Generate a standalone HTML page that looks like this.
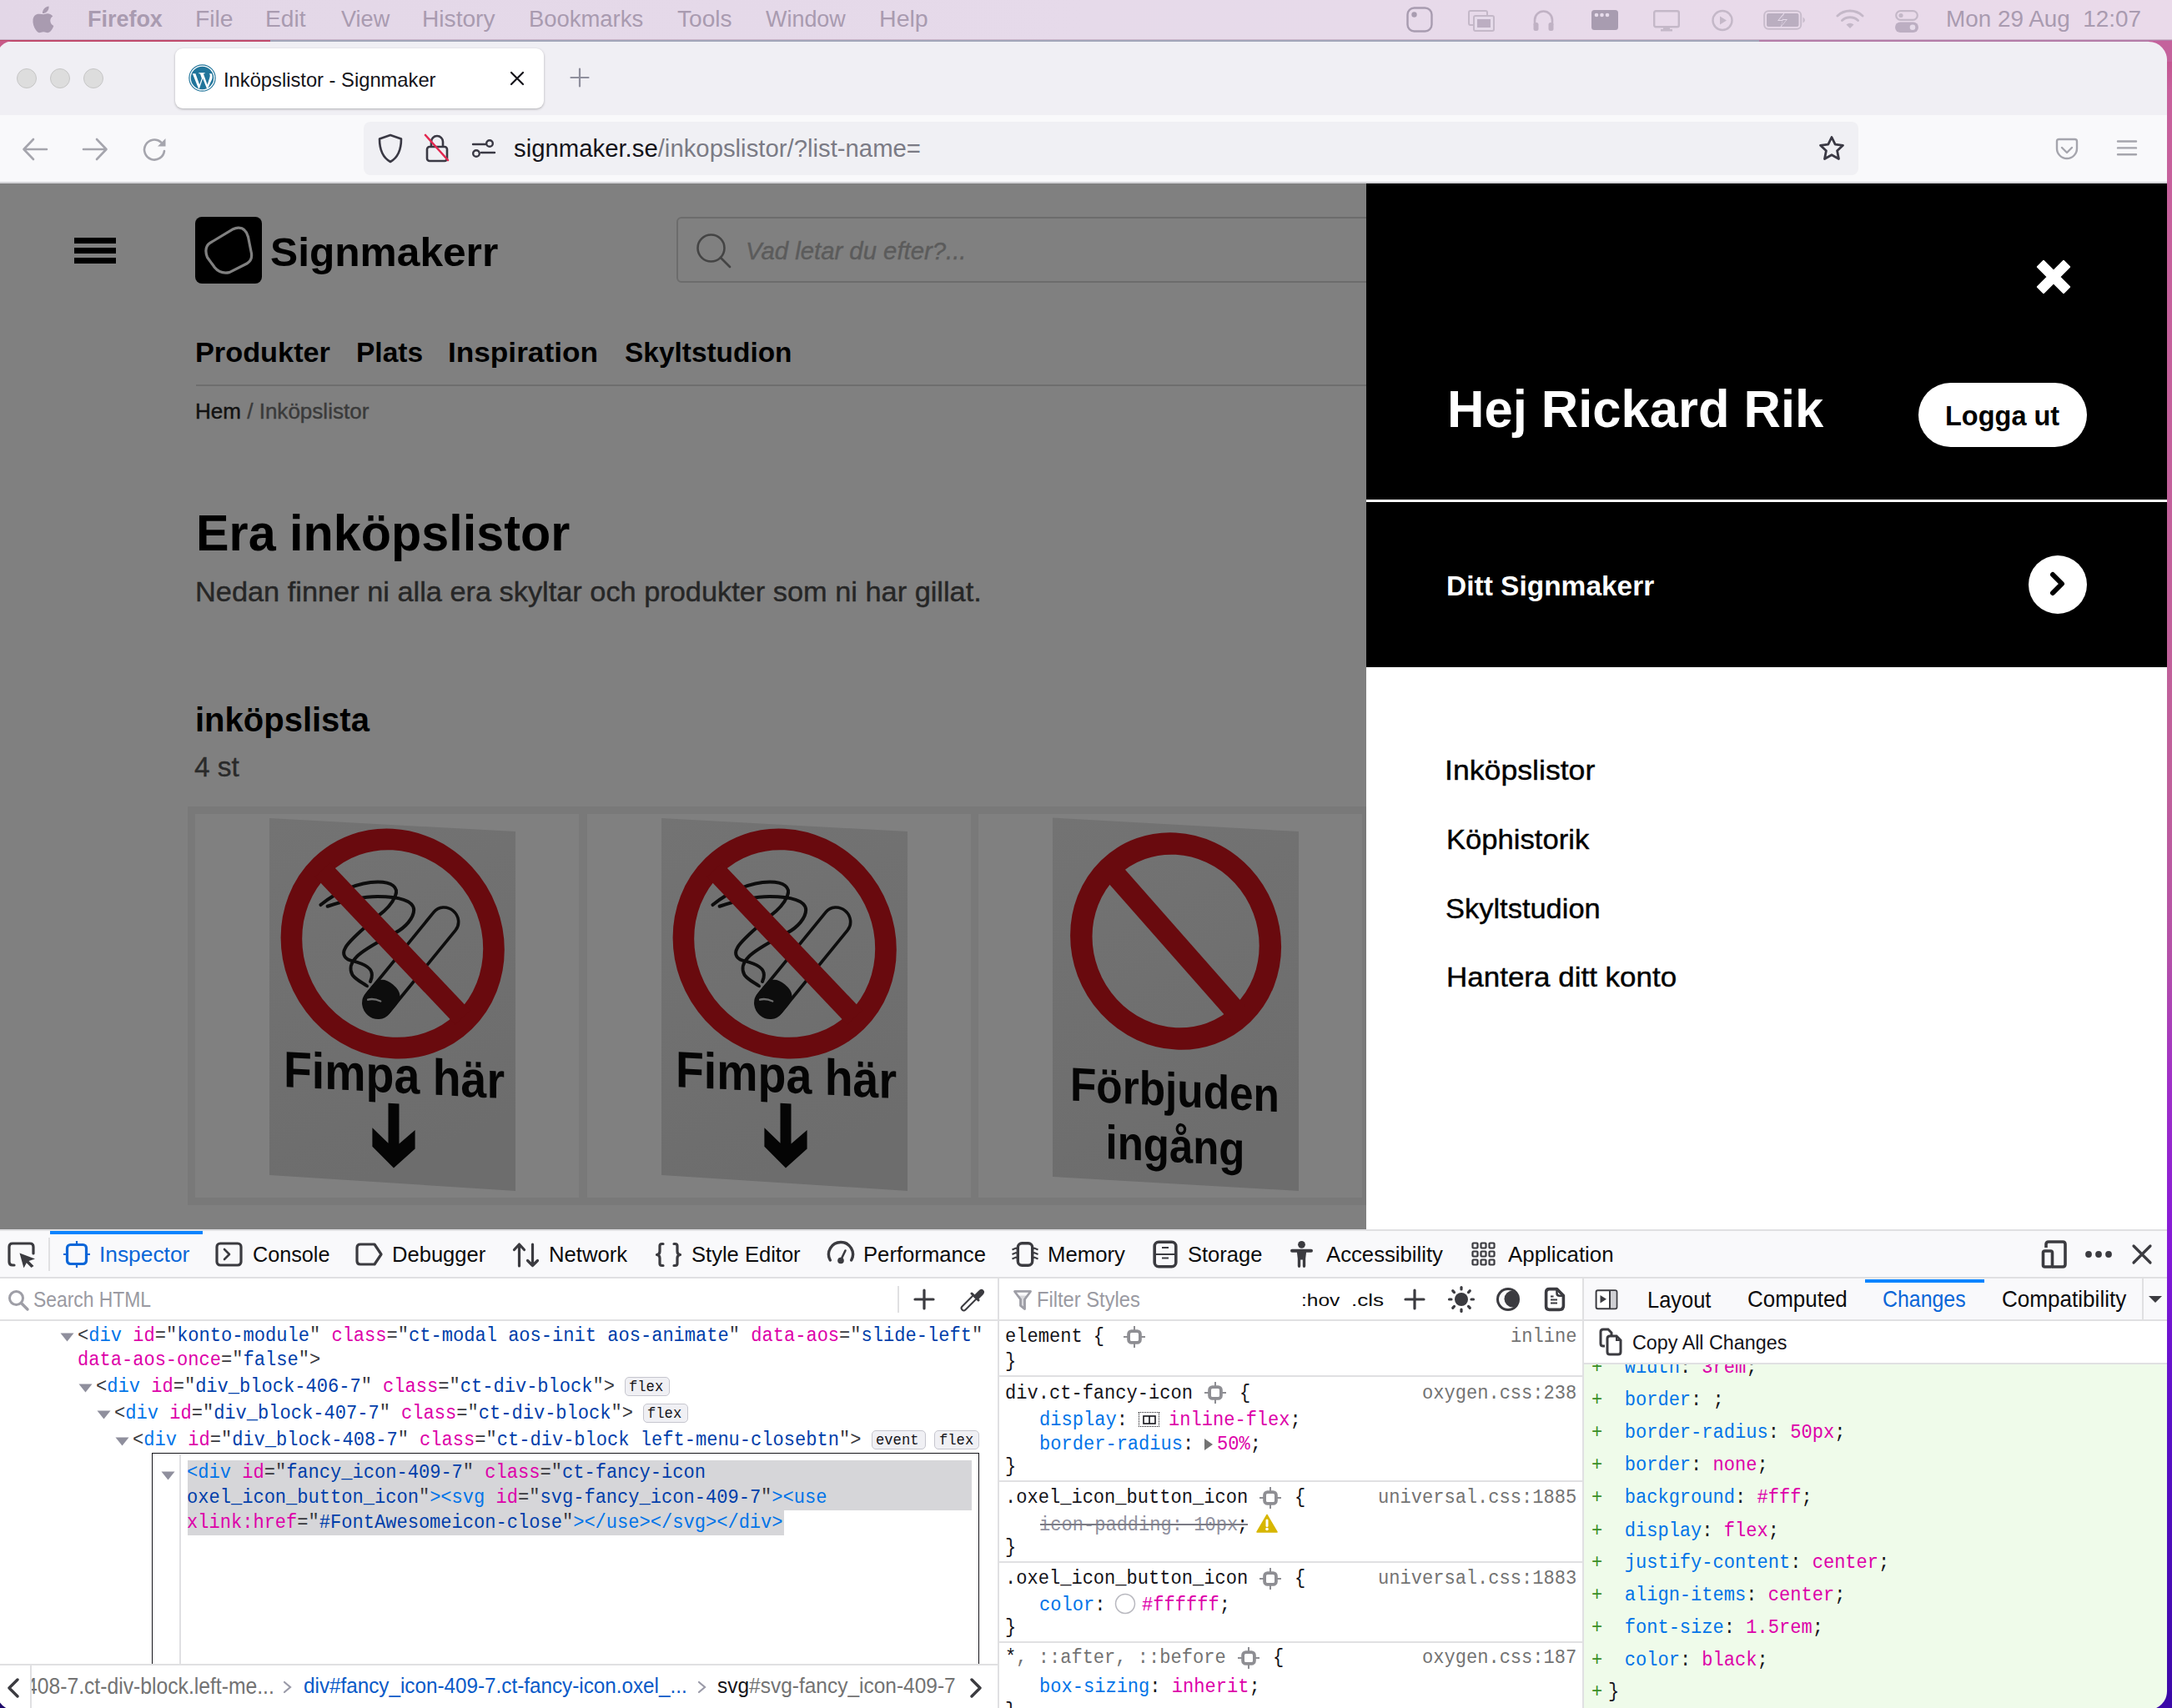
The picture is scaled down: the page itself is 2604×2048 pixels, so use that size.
<!DOCTYPE html>
<html><head><meta charset="utf-8">
<style>
*{box-sizing:border-box;margin:0;padding:0}
html,body{width:2604px;height:2048px;overflow:hidden;background:#fff}
body{position:relative;font-family:"Liberation Sans",sans-serif}
.t{position:absolute;white-space:nowrap;transform-origin:0 0}
</style></head><body>
<div class="t" style="left:0;top:0;width:2604px;height:2048px;background:linear-gradient(180deg,#e08ab0 0px,#c86aa0 400px,#b04aa8 1200px,#7a1cd0 1700px,#5012c0 2048px)"></div>
<div class="t" style="left:0;top:0;width:2604px;height:48px;background:linear-gradient(90deg,#e3d7e7,#e6daea 50%,#eadaea)"></div>
<div class="t" style="left:0.0px;top:47.0px;width:2604.0px;height:1.0px;background:rgba(150,110,140,.35);"></div>
<svg class="t" style="left:38.0px;top:6.0px;" width="30" height="34" viewBox="0 0 30 34"><path d="M20.5 1.5C21 4 19.8 6.5 18.2 8C16.6 9.6 14.3 10.2 13 10C12.7 7.6 13.9 5.2 15.3 3.9C16.8 2.4 19 1.5 20.5 1.5Z M13.8 11.2C15.4 11.2 17 10.2 18.8 10.2C21.8 10.2 24 11.8 25.3 13.6C22.4 15.4 22.2 18.2 22.4 19.8C22.7 22.4 24.4 24 26.3 25C25.6 27.2 24.4 29.4 23 31C21.8 32.4 20.6 33.2 19 33.2C17.2 33.2 16.5 32.2 14.2 32.2C11.8 32.2 11 33.2 9.3 33.2C7.6 33.2 6.3 31.8 5 30C2.5 26.5 1 21.5 1.5 17.5C2 13.4 5 10.8 8.4 10.8C10.6 10.8 12.2 11.2 13.8 11.2Z" fill="#a99bb0"/></svg>
<div class="t" style="left:104.75px;top:6.51px;font-size:26.81px;line-height:32px;color:#a99bb0;font-weight:bold;transform:scaleX(1.0053);">Firefox</div>
<div class="t" style="left:233.74px;top:6.51px;font-size:26.81px;line-height:32px;color:#a99bb0;transform:scaleX(1.0549);">File</div>
<div class="t" style="left:317.75px;top:6.51px;font-size:26.81px;line-height:32px;color:#a99bb0;transform:scaleX(1.0493);">Edit</div>
<div class="t" style="left:408.56px;top:6.51px;font-size:26.81px;line-height:32px;color:#a99bb0;transform:scaleX(1.0102);">View</div>
<div class="t" style="left:506.45px;top:6.51px;font-size:26.81px;line-height:32px;color:#a99bb0;transform:scaleX(1.0500);">History</div>
<div class="t" style="left:633.81px;top:6.51px;font-size:26.81px;line-height:32px;color:#a99bb0;transform:scaleX(1.0231);">Bookmarks</div>
<div class="t" style="left:812.14px;top:6.51px;font-size:26.81px;line-height:32px;color:#a99bb0;transform:scaleX(1.0469);">Tools</div>
<div class="t" style="left:918.47px;top:6.51px;font-size:26.81px;line-height:32px;color:#a99bb0;transform:scaleX(1.0051);">Window</div>
<div class="t" style="left:1053.71px;top:6.51px;font-size:26.81px;line-height:32px;color:#a99bb0;transform:scaleX(1.0659);">Help</div>
<div class="t" style="left:2332.77px;top:6.51px;font-size:26.81px;line-height:32px;color:#a99bb0;transform:scaleX(1.0402);white-space:pre;">Mon 29 Aug  12:07</div>
<svg class="t" style="left:1686.0px;top:8.0px;" width="32" height="31" viewBox="0 0 32 31"><rect x="1.5" y="1.5" width="29" height="28" rx="8" fill="none" stroke="#a89cb0" stroke-width="2.4"/><circle cx="9.5" cy="9.5" r="3.2" fill="#a89cb0"/></svg>
<svg class="t" style="left:1760.0px;top:12.0px;" width="32" height="26" viewBox="0 0 32 26"><rect x="1" y="1" width="22" height="17" rx="2" fill="none" stroke="#c4b8c8" stroke-width="2"/><rect x="7" y="7" width="24" height="18" rx="2" fill="#e6dbea" stroke="#c4b8c8" stroke-width="2"/><rect x="11" y="11" width="16" height="10" fill="#bcaec2"/></svg>
<svg class="t" style="left:1837.0px;top:10.0px;" width="27" height="28" viewBox="0 0 27 28"><path d="M3 20V14A10.5 10.5 0 0 1 24 14V20" fill="none" stroke="#c0b2c4" stroke-width="2.6"/><rect x="1.5" y="17" width="6" height="10" rx="2.5" fill="#c0b2c4"/><rect x="19.5" y="17" width="6" height="10" rx="2.5" fill="#c0b2c4"/></svg>
<svg class="t" style="left:1908.0px;top:12.0px;" width="32" height="24" viewBox="0 0 32 24"><rect x="0" y="0" width="32" height="24" rx="3.5" fill="#a89cb0"/><circle cx="6" cy="6" r="2.3" fill="#e6dbea"/><circle cx="12.5" cy="6" r="2.3" fill="#e6dbea"/><circle cx="19" cy="6" r="2.3" fill="#e6dbea"/></svg>
<svg class="t" style="left:1982.0px;top:12.0px;" width="32" height="26" viewBox="0 0 32 26"><rect x="1.2" y="1.2" width="29.6" height="19" rx="2" fill="none" stroke="#c4b8c8" stroke-width="2.4"/><rect x="12" y="20" width="8" height="3" fill="#c4b8c8"/><rect x="9" y="23" width="14" height="2.5" fill="#c4b8c8"/></svg>
<svg class="t" style="left:2052.0px;top:11.0px;" width="26" height="27" viewBox="0 0 26 27"><circle cx="13" cy="13.5" r="11.5" fill="none" stroke="#c4b8c8" stroke-width="2.4"/><path d="M10 8.5L18 13.5L10 18.5Z" fill="#c4b8c8"/></svg>
<svg class="t" style="left:2114.0px;top:12.0px;" width="52" height="24" viewBox="0 0 52 24"><rect x="1.2" y="1.2" width="44" height="21.6" rx="5" fill="none" stroke="#c8bccc" stroke-width="2"/><rect x="4" y="4" width="38.5" height="16" rx="2" fill="#baaec0"/><path d="M47.5 8.5V15.5Q50 14 50 12Q50 10 47.5 8.5Z" fill="#c8bccc"/><path d="M26 2L17 13H23L20 22L29 11H23Z" fill="#e6dbea"/><path d="M25.5 4.5L18.8 12H23.6L21.2 19.5L27.5 12H22.5Z" fill="#baaec0"/></svg>
<svg class="t" style="left:2201.0px;top:10.0px;" width="34" height="25" viewBox="0 0 34 25"><path d="M2 9A22 22 0 0 1 32 9" fill="none" stroke="#c4b8c8" stroke-width="3" stroke-linecap="round"/><path d="M7.5 14.5A14 14 0 0 1 26.5 14.5" fill="none" stroke="#c4b8c8" stroke-width="3" stroke-linecap="round"/><path d="M12.5 19.5A6.5 6.5 0 0 1 21.5 19.5L17 24Z" fill="#c4b8c8"/></svg>
<svg class="t" style="left:2272.0px;top:12.0px;" width="28" height="27" viewBox="0 0 28 27"><rect x="1.2" y="1.2" width="25.6" height="10.6" rx="5.3" fill="none" stroke="#c4b8c8" stroke-width="2.2"/><circle cx="7" cy="6.5" r="2.6" fill="#c4b8c8"/><rect x="0" y="14.5" width="28" height="12.5" rx="6.2" fill="#bcaec2"/><circle cx="21" cy="20.7" r="3.3" fill="#e6dbea"/></svg>
<div class="t" style="left:0.0px;top:50.0px;width:2598.0px;height:88.0px;background:#f0eff4;"></div>
<div class="t" style="left:0.0px;top:138.0px;width:2598.0px;height:80.0px;background:#f9f9fb;"></div>
<div class="t" style="left:0.0px;top:218.0px;width:2598.0px;height:2.0px;background:#d4d4d8;"></div>
<div class="t" style="left:20px;top:82px;width:24px;height:24px;border-radius:50%;background:#dddddd;border:1px solid #c6c6c6"></div>
<div class="t" style="left:60px;top:82px;width:24px;height:24px;border-radius:50%;background:#dddddd;border:1px solid #c6c6c6"></div>
<div class="t" style="left:100px;top:82px;width:24px;height:24px;border-radius:50%;background:#dddddd;border:1px solid #c6c6c6"></div>
<div class="t" style="left:210px;top:58px;width:442px;height:72px;background:#fff;border-radius:9px;box-shadow:0 1px 3px rgba(0,0,0,.28)"></div>
<svg class="t" style="left:226.0px;top:77.0px;" width="33" height="33" viewBox="0 0 33 33"><circle cx="16.5" cy="16.5" r="16.2" fill="#21759b"/><circle cx="16.5" cy="16.5" r="14.4" fill="none" stroke="#fff" stroke-width="1.3"/><path d="M4.8 11.2H8.4L13.2 24.6L15.9 16.9L14 11.6L12.3 11.3V10.3H19.6V11.3L17.9 11.6L22.6 24.6L25.3 16.2C26.3 13.2 25.6 11.8 24.6 11.2H27.8C28.7 13.2 29 15.6 28.2 18L23.1 29.1H21.9L17.1 16.9L13.1 29.1H11.9Z" fill="#fff"/></svg>
<div class="t" style="left:267.86px;top:81.97px;font-size:23.19px;line-height:28px;color:#15141a;transform:scaleX(1.0233);">Inköpslistor - Signmaker</div>
<svg class="t" style="left:611.0px;top:85.0px;" width="18" height="18" viewBox="0 0 18 18"><path d="M2 2L16 16M16 2L2 16" stroke="#15141a" stroke-width="2.2" stroke-linecap="round"/></svg>
<svg class="t" style="left:683.0px;top:81.0px;" width="24" height="24" viewBox="0 0 24 24"><path d="M12 1.5V22.5M1.5 12H22.5" stroke="#8f8f9d" stroke-width="2.2" stroke-linecap="round"/></svg>
<svg class="t" style="left:26.0px;top:165.0px;" width="32" height="28" viewBox="0 0 32 28"><path d="M30 14H3M14 2L2.5 14L14 26" fill="none" stroke="#a5a5ad" stroke-width="2.6" stroke-linecap="round" stroke-linejoin="round"/></svg>
<svg class="t" style="left:98.0px;top:165.0px;" width="32" height="28" viewBox="0 0 32 28"><path d="M2 14H29M18 2L29.5 14L18 26" fill="none" stroke="#a5a5ad" stroke-width="2.6" stroke-linecap="round" stroke-linejoin="round"/></svg>
<svg class="t" style="left:170.0px;top:164.0px;" width="32" height="32" viewBox="0 0 32 32"><path d="M27 17A12 12 0 1 1 23 6.5" fill="none" stroke="#a5a5ad" stroke-width="2.6" stroke-linecap="round"/><path d="M28.5 2V11.5H19Z" fill="#a5a5ad"/></svg>
<div class="t" style="left:436px;top:146px;width:1792px;height:64px;background:#f0f0f4;border-radius:8px"></div>
<svg class="t" style="left:453.0px;top:160.0px;" width="30" height="36" viewBox="0 0 30 36"><path d="M15 2L28 6.5C28 20 24 29 15 34C6 29 2 20 2 6.5Z" fill="none" stroke="#3a3944" stroke-width="2.6" stroke-linejoin="round"/></svg>
<svg class="t" style="left:508.0px;top:160.0px;" width="32" height="36" viewBox="0 0 32 36"><path d="M9 16V10A7 7 0 0 1 23 10V16" fill="none" stroke="#3a3944" stroke-width="2.6"/><rect x="4" y="16" width="24" height="17" rx="3" fill="none" stroke="#3a3944" stroke-width="2.6"/><path d="M2 2L29 32" stroke="#e22850" stroke-width="2.6" stroke-linecap="round"/></svg>
<svg class="t" style="left:565.0px;top:165.0px;" width="30" height="26" viewBox="0 0 30 26"><circle cx="22" cy="7" r="3.8" fill="none" stroke="#3a3944" stroke-width="2.4"/><circle cx="6" cy="19" r="3.8" fill="none" stroke="#3a3944" stroke-width="2.4"/><path d="M2 8H17M12 18H28" stroke="#3a3944" stroke-width="2.4" stroke-linecap="round"/></svg>
<div class="t" style="left:616.12px;top:160.49px;font-size:30.34px;line-height:36px;color:#15141a;transform:scaleX(0.9666);">signmaker.se<span style="color:#7b7b85">/inkopslistor/?list-name=</span></div>
<svg class="t" style="left:2179.0px;top:161.0px;" width="34" height="34" viewBox="0 0 34 34"><path d="M17 3.5L21.2 12.2L30.5 13.3L23.6 19.8L25.5 29.5L17 24.7L8.5 29.5L10.4 19.8L3.5 13.3L12.8 12.2Z" fill="none" stroke="#3a3944" stroke-width="2.8" stroke-linejoin="round"/></svg>
<svg class="t" style="left:2463.0px;top:165.0px;" width="30" height="30" viewBox="0 0 30 30"><path d="M3 4.5Q3 2 5.5 2H24.5Q27 2 27 4.5V13A12 12 0 0 1 3 13Z" fill="none" stroke="#a5a5ad" stroke-width="2.4"/><path d="M9 12L15 18L21 12" fill="none" stroke="#a5a5ad" stroke-width="2.4" stroke-linecap="round" stroke-linejoin="round"/></svg>
<svg class="t" style="left:2537.0px;top:167.0px;" width="26" height="22" viewBox="0 0 26 22"><path d="M2 2.5H24M2 10.4H24M2 18.2H24" stroke="#a5a5ad" stroke-width="2.4" stroke-linecap="round"/></svg>
<div class="t" style="left:0.0px;top:220.0px;width:1638.0px;height:1254.0px;background:#808080;"></div>
<div class="t" style="left:89.0px;top:285.0px;width:50.0px;height:6.5px;background:#000;"></div>
<div class="t" style="left:89.0px;top:297.0px;width:50.0px;height:6.5px;background:#000;"></div>
<div class="t" style="left:89.0px;top:309.0px;width:50.0px;height:6.5px;background:#000;"></div>
<div class="t" style="left:234px;top:260px;width:80px;height:80px;background:#000;border-radius:8px"></div>
<svg class="t" style="left:234.0px;top:260.0px;" width="80" height="80" viewBox="0 0 80 80"><path d="M45.5 14.7L18 31.2Q10 36.5 14.5 48.5L23.4 60.8Q30 68.8 41 66.6L62 56Q68.8 52 67.4 43.5L63.5 24Q60.5 13 51.8 13.2Q48.5 13.3 45.5 14.7Z" fill="none" stroke="#808080" stroke-width="3.2" stroke-linejoin="round"/></svg>
<div class="t" style="left:324.11px;top:273.72px;font-size:47.29px;line-height:57px;color:#000;font-weight:bold;transform:scaleX(1.0504);">Signmakerr</div>
<div class="t" style="left:811px;top:260px;width:900px;height:79px;border:2px solid #6c6c6c;border-radius:6px"></div>
<svg class="t" style="left:832.0px;top:278.0px;" width="46" height="46" viewBox="0 0 46 46"><circle cx="20.5" cy="19.5" r="16" fill="none" stroke="#444" stroke-width="2.6"/><path d="M32 31L43 42" stroke="#444" stroke-width="2.8" stroke-linecap="round"/></svg>
<div class="t" style="left:893.51px;top:283.06px;font-size:29.57px;line-height:35px;color:#5b5b5b;font-style:italic;transform:scaleX(0.9915);-webkit-text-stroke:0.4px currentColor;">Vad letar du efter?...</div>
<div class="t" style="left:234.07px;top:401.70px;font-size:33.77px;line-height:41px;color:#000;font-weight:bold;transform:scaleX(1.0156);">Produkter</div>
<div class="t" style="left:427.32px;top:401.70px;font-size:33.77px;line-height:41px;color:#000;font-weight:bold;transform:scaleX(0.9914);">Plats</div>
<div class="t" style="left:537.21px;top:401.70px;font-size:33.77px;line-height:41px;color:#000;font-weight:bold;transform:scaleX(1.0426);">Inspiration</div>
<div class="t" style="left:748.60px;top:401.62px;font-size:34.00px;line-height:41px;color:#000;font-weight:bold;transform:scaleX(0.9829);">Skyltstudion</div>
<div class="t" style="left:235.0px;top:461.0px;width:1403.0px;height:2.0px;background:#6e6e6e;"></div>
<div class="t" style="left:233.82px;top:478.16px;font-size:24.93px;line-height:30px;color:#111;transform:scaleX(1.0444);-webkit-text-stroke:0.4px currentColor;">Hem<span style="color:#3a3a3a"> / Inköpslistor</span></div>
<div class="t" style="left:234.85px;top:603.21px;font-size:60.58px;line-height:73px;color:#000;font-weight:bold;transform:scaleX(0.9790);">Era inköpslistor</div>
<div class="t" style="left:234.15px;top:690.20px;font-size:33.48px;line-height:40px;color:#262626;transform:scaleX(1.0259);-webkit-text-stroke:0.4px currentColor;">Nedan finner ni alla era skyltar och produkter som ni har gillat.</div>
<div class="t" style="left:233.60px;top:837.66px;font-size:41.38px;line-height:50px;color:#000;font-weight:bold;transform:scaleX(0.9667);">inköpslista</div>
<div class="t" style="left:233.43px;top:898.50px;font-size:34.06px;line-height:41px;color:#2a2a2a;transform:scaleX(0.9800);-webkit-text-stroke:0.4px currentColor;">4 st</div>
<div class="t" style="left:225.0px;top:967.0px;width:1413.0px;height:478.0px;background:#797979;"></div>
<div class="t" style="left:234.0px;top:976.0px;width:460.0px;height:460.0px;background:#808080;"></div>
<div class="t" style="left:704.0px;top:976.0px;width:460.0px;height:460.0px;background:#808080;"></div>
<div class="t" style="left:1173.0px;top:976.0px;width:460.0px;height:460.0px;background:#808080;"></div>
<svg class="t" style="left:0;top:0" width="1638" height="1474" viewBox="0 0 1638 1474"><defs><linearGradient id="sg" x1="0" y1="0" x2="0.3" y2="1"><stop offset="0" stop-color="#737373"/><stop offset="1" stop-color="#6d6d6d"/></linearGradient></defs><polygon points="323,981 618,997 618,1428 323,1409" fill="url(#sg)"/><g transform="translate(323 981) matrix(1 0.05424 0 1 0 0)"><ellipse cx="147.7" cy="142.5" rx="121.3" ry="125" fill="none" stroke="#690a0e" stroke-width="25.6"/><path d="M 61.4 100.7 C 82.0 82.6  107.0 71.2  130.0 69.5 C 147.0 68.6  155.0 74.6  151.0 84.8 C 147.0 95.0  139.0 103.5  129.9 110.5 C 117.0 122.7  97.0 139.7  91.3 150.0 C 86.0 159.3  91.0 165.1  100.7 165.9 C 111.0 168.0  123.0 172.3  122.9 181.1 C 123.0 184.3  122.0 187.4  121.0 189.4" fill="none" stroke="#0d0d0d" stroke-width="4" stroke-linecap="round"/><path d="M 69.6 102.0 C 87.0 95.3  109.0 88.1  129.9 87.0 C 155.0 85.6  173.0 89.6  173.2 100.6 C 173.0 110.6  163.0 122.2  151.0 129.2 C 135.0 138.7  113.0 150.9  104.2 161.0 C 97.0 168.7  96.0 176.8  99.5 182.6 C 104.0 188.4  111.0 191.0  117.0 194.9" fill="none" stroke="#0d0d0d" stroke-width="4" stroke-linecap="round"/><g transform="translate(119.2 228.6) rotate(-52.02)"><rect x="0" y="-16.5" width="164.3" height="33" rx="16.5" fill="none" stroke="#0d0d0d" stroke-width="3.6"/><path d="M18 -18.3H30Q47 -18.3 47 0Q47 18.3 30 18.3H18A18.3 18.3 0 0 1 18 -18.3Z" fill="#0d0d0d"/><path d="M13 -11.5Q19 -7.5 21.5 1" fill="none" stroke="#6e6e6e" stroke-width="2.4" stroke-linecap="round"/></g><path d="M63.7 58.5 L231.7 226.5" stroke="#690a0e" stroke-width="25.5"/><text x="17" y="321" font-family="Liberation Sans" font-weight="bold" font-size="61" fill="#050505" textLength="265" lengthAdjust="spacingAndGlyphs">Fimpa här</text><path d="M142.5 334H155.5V382L174.6 364.5V387L149 411.5L123.4 387V364.5L142.5 382Z" fill="#050505"/></g><polygon points="793,981 1088,997 1088,1428 793,1409" fill="url(#sg)"/><g transform="translate(793 981) matrix(1 0.05424 0 1 0 0)"><ellipse cx="147.7" cy="142.5" rx="121.3" ry="125" fill="none" stroke="#690a0e" stroke-width="25.6"/><path d="M 61.4 100.7 C 82.0 82.6  107.0 71.2  130.0 69.5 C 147.0 68.6  155.0 74.6  151.0 84.8 C 147.0 95.0  139.0 103.5  129.9 110.5 C 117.0 122.7  97.0 139.7  91.3 150.0 C 86.0 159.3  91.0 165.1  100.7 165.9 C 111.0 168.0  123.0 172.3  122.9 181.1 C 123.0 184.3  122.0 187.4  121.0 189.4" fill="none" stroke="#0d0d0d" stroke-width="4" stroke-linecap="round"/><path d="M 69.6 102.0 C 87.0 95.3  109.0 88.1  129.9 87.0 C 155.0 85.6  173.0 89.6  173.2 100.6 C 173.0 110.6  163.0 122.2  151.0 129.2 C 135.0 138.7  113.0 150.9  104.2 161.0 C 97.0 168.7  96.0 176.8  99.5 182.6 C 104.0 188.4  111.0 191.0  117.0 194.9" fill="none" stroke="#0d0d0d" stroke-width="4" stroke-linecap="round"/><g transform="translate(119.2 228.6) rotate(-52.02)"><rect x="0" y="-16.5" width="164.3" height="33" rx="16.5" fill="none" stroke="#0d0d0d" stroke-width="3.6"/><path d="M18 -18.3H30Q47 -18.3 47 0Q47 18.3 30 18.3H18A18.3 18.3 0 0 1 18 -18.3Z" fill="#0d0d0d"/><path d="M13 -11.5Q19 -7.5 21.5 1" fill="none" stroke="#6e6e6e" stroke-width="2.4" stroke-linecap="round"/></g><path d="M63.7 58.5 L231.7 226.5" stroke="#690a0e" stroke-width="25.5"/><text x="17" y="321" font-family="Liberation Sans" font-weight="bold" font-size="61" fill="#050505" textLength="265" lengthAdjust="spacingAndGlyphs">Fimpa här</text><path d="M142.5 334H155.5V382L174.6 364.5V387L149 411.5L123.4 387V364.5L142.5 382Z" fill="#050505"/></g><polygon points="1262.0,980.5 1557.0,997.0 1557.0,1428.0 1262.0,1411.0" fill="url(#sg)"/><g transform="translate(1262.0 980.5) matrix(1 0.05424 0 1 0 0)"><ellipse cx="147.6" cy="140.0" rx="113.3" ry="116.9" fill="none" stroke="#690a0e" stroke-width="26.4"/><path d="M71.3 60.2L221.4 222.2" stroke="#690a0e" stroke-width="26.5"/><text x="21" y="338" font-family="Liberation Sans" font-weight="bold" font-size="57" fill="#050505" textLength="251" lengthAdjust="spacingAndGlyphs">Förbjuden</text><text x="63.5" y="405" font-family="Liberation Sans" font-weight="bold" font-size="57" fill="#050505" textLength="167" lengthAdjust="spacingAndGlyphs">ingång</text></g></svg>
<div class="t" style="left:1638.0px;top:220.0px;width:960.0px;height:580.0px;background:#000;"></div>
<div class="t" style="left:1638.0px;top:800.0px;width:960.0px;height:674.0px;background:#fff;"></div>
<svg class="t" style="left:2440.0px;top:309.0px;" width="44" height="44" viewBox="0 0 44 44"><path d="M3.0 11.0 L10.0 4.0 L22.0 16.0 L34.0 4.0 L41.0 11.0 L29.0 23.0 L41.0 35.0 L34.0 42.0 L22.0 30.0 L10.0 42.0 L3.0 35.0 L15.0 23.0Z" fill="#fff" stroke="#fff" stroke-width="2.4" stroke-linejoin="round"/></svg>
<div class="t" style="left:1735.00px;top:451.91px;font-size:63.19px;line-height:76px;color:#fff;font-weight:bold;transform:scaleX(0.9735);">Hej Rickard Rik</div>
<div class="t" style="left:2300px;top:459px;width:201.7px;height:77px;background:#fff;border-radius:39px"></div>
<div class="t" style="left:2332.49px;top:478.10px;font-size:33.77px;line-height:41px;color:#000;font-weight:bold;transform:scaleX(0.9624);">Logga ut</div>
<div class="t" style="left:1638.0px;top:599.0px;width:960.0px;height:2.5px;background:#fff;"></div>
<div class="t" style="left:1734.22px;top:681.60px;font-size:33.77px;line-height:41px;color:#fff;font-weight:bold;transform:scaleX(0.9915);">Ditt Signmakerr</div>
<div class="t" style="left:2432px;top:665.5px;width:70px;height:70px;background:#fff;border-radius:50%"></div>
<svg class="t" style="left:2455.0px;top:685.0px;" width="24" height="30" viewBox="0 0 24 30"><path d="M6 4L17 15L6 26" fill="none" stroke="#000" stroke-width="6" stroke-linecap="round" stroke-linejoin="round"/></svg>
<div class="t" style="left:1731.79px;top:903.65px;font-size:33.33px;line-height:40px;color:#000;transform:scaleX(1.0697);-webkit-text-stroke:0.4px currentColor;">Inköpslistor</div>
<div class="t" style="left:1733.93px;top:986.65px;font-size:33.04px;line-height:40px;color:#000;transform:scaleX(1.0482);-webkit-text-stroke:0.4px currentColor;">Köphistorik</div>
<div class="t" style="left:1733.15px;top:1068.87px;font-size:34.14px;line-height:41px;color:#000;transform:scaleX(1.0096);-webkit-text-stroke:0.4px currentColor;">Skyltstudion</div>
<div class="t" style="left:1733.90px;top:1152.35px;font-size:33.62px;line-height:40px;color:#000;transform:scaleX(1.0409);-webkit-text-stroke:0.4px currentColor;">Hantera ditt konto</div>
<div class="t" style="left:0.0px;top:1474.0px;width:2598.0px;height:574.0px;background:#fff;"></div>
<div class="t" style="left:0.0px;top:1474.0px;width:2598.0px;height:58.0px;background:#f9f9fb;"></div>
<div class="t" style="left:0.0px;top:1474.0px;width:2598.0px;height:2.0px;background:#e0e0e2;"></div>
<div class="t" style="left:0.0px;top:1531.0px;width:2598.0px;height:2.0px;background:#e0e0e2;"></div>
<div class="t" style="left:60.0px;top:1475.5px;width:183.0px;height:4.0px;background:#0a84ff;"></div>
<div class="t" style="left:58.0px;top:1484.0px;width:2.0px;height:40.0px;background:#e0e0e2;"></div>
<svg class="t" style="left:9.0px;top:1489.0px;" width="36" height="31" viewBox="0 0 36 31"><path d="M8 28H6Q2 28 2 24V6Q2 2 6 2H27Q31 2 31 6V14" fill="none" stroke="#3b3b40" stroke-width="3.2" stroke-linecap="round"/><path d="M14.5 13.5L33 20.5L25.5 23L31.5 29L28.5 31L22.8 25.2L19.5 31.5Z" fill="#3b3b40"/></svg>
<svg class="t" style="left:75.0px;top:1487.0px;" width="34" height="34" viewBox="0 0 34 34"><rect x="5.5" y="5.5" width="23" height="23" rx="4" fill="none" stroke="#0a66d8" stroke-width="3.2"/><path d="M17 1V6M17 28V33M1 17H6M28 17H33" stroke="#0a66d8" stroke-width="2.2"/></svg>
<div class="t" style="left:118.63px;top:1488.91px;font-size:26.23px;line-height:31px;color:#0a66d8;transform:scaleX(1.0042);">Inspector</div>
<svg class="t" style="left:258.0px;top:1489.0px;" width="34" height="30" viewBox="0 0 34 30"><rect x="2" y="2" width="29" height="26" rx="4" fill="none" stroke="#3b3b40" stroke-width="3.2"/><path d="M11 9L17 15L11 21" fill="none" stroke="#3b3b40" stroke-width="2.6" stroke-linecap="round" stroke-linejoin="round"/></svg>
<div class="t" style="left:302.64px;top:1489.04px;font-size:25.86px;line-height:31px;color:#0c0c0d;transform:scaleX(0.9747);">Console</div>
<svg class="t" style="left:426.0px;top:1490.0px;" width="34" height="28" viewBox="0 0 34 28"><path d="M6 2H23L31 14L23 26H6Q2 26 2 22V6Q2 2 6 2Z" fill="none" stroke="#3b3b40" stroke-width="3.2" stroke-linejoin="round"/></svg>
<div class="t" style="left:469.55px;top:1488.91px;font-size:26.23px;line-height:31px;color:#0c0c0d;transform:scaleX(0.9746);">Debugger</div>
<svg class="t" style="left:614.0px;top:1489.0px;" width="34" height="31" viewBox="0 0 34 31"><path d="M8.5 29V3M2.5 9.5L8.5 3L14.5 9.5M24.5 3V28.5M18.5 22.5L24.5 28.5L30.5 22.5" fill="none" stroke="#3b3b40" stroke-width="3.2" stroke-linecap="round" stroke-linejoin="round"/></svg>
<div class="t" style="left:657.75px;top:1488.91px;font-size:26.23px;line-height:31px;color:#0c0c0d;transform:scaleX(0.9791);">Network</div>
<svg class="t" style="left:785.0px;top:1489.0px;" width="33" height="31" viewBox="0 0 33 31"><path d="M10 2.5H8.5Q6 2.5 6 5V11.5Q6 15 2.5 15.5Q6 16 6 19.5V26Q6 28.5 8.5 28.5H10M23 2.5H24.5Q27 2.5 27 5V11.5Q27 15 30.5 15.5Q27 16 27 19.5V26Q27 28.5 24.5 28.5H23" fill="none" stroke="#3b3b40" stroke-width="3.2" stroke-linecap="round" stroke-linejoin="round"/></svg>
<div class="t" style="left:828.85px;top:1489.04px;font-size:25.86px;line-height:31px;color:#0c0c0d;transform:scaleX(0.9879);">Style Editor</div>
<svg class="t" style="left:991.0px;top:1486.0px;" width="34" height="32" viewBox="0 0 34 32"><path d="M4.3 25A14.5 14.5 0 1 1 29.7 25" fill="none" stroke="#3b3b40" stroke-width="3.4" stroke-linecap="round"/><path d="M17 25L22.5 13.5" stroke="#3b3b40" stroke-width="2.6" stroke-linecap="round"/><circle cx="17" cy="25.5" r="3.8" fill="#3b3b40"/></svg>
<div class="t" style="left:1034.75px;top:1488.91px;font-size:26.23px;line-height:31px;color:#0c0c0d;transform:scaleX(0.9789);">Performance</div>
<svg class="t" style="left:1212.0px;top:1489.0px;" width="34" height="30" viewBox="0 0 34 30"><rect x="8.3" y="1.8" width="17.4" height="26.4" rx="5" fill="none" stroke="#3b3b40" stroke-width="3.4"/><path d="M1.5 9.5L6 7.5L8 8.5M1.5 15L6 13L8 14M1.5 20.5L6 18.5L8 19.5M32.5 9.5L28 7.5L26 8.5M32.5 15L28 13L26 14M32.5 20.5L28 18.5L26 19.5" fill="none" stroke="#3b3b40" stroke-width="2"/></svg>
<div class="t" style="left:1255.54px;top:1488.91px;font-size:26.23px;line-height:31px;color:#0c0c0d;transform:scaleX(0.9806);">Memory</div>
<svg class="t" style="left:1382.0px;top:1487.0px;" width="30" height="34" viewBox="0 0 30 34"><rect x="2.2" y="2.2" width="25.6" height="29.6" rx="5" fill="none" stroke="#3b3b40" stroke-width="3.6"/><path d="M2 17H28M11 9H19M11 21.5H19" stroke="#3b3b40" stroke-width="2.2"/></svg>
<div class="t" style="left:1424.35px;top:1489.04px;font-size:25.86px;line-height:31px;color:#0c0c0d;transform:scaleX(0.9867);">Storage</div>
<svg class="t" style="left:1546.0px;top:1487.0px;" width="32" height="34" viewBox="0 0 32 34"><circle cx="14.5" cy="5.3" r="4.4" fill="#3b3b40"/><path d="M3 12.8H26" stroke="#3b3b40" stroke-width="4" stroke-linecap="round"/><path d="M8.6 11.5H20.4L19.2 22V31Q19.2 33 17.4 33Q15.8 33 15.8 31V23.5H13.2V31Q13.2 33 11.6 33Q9.8 33 9.8 31V22Z" fill="#3b3b40"/></svg>
<div class="t" style="left:1590.00px;top:1488.91px;font-size:26.23px;line-height:31px;color:#0c0c0d;transform:scaleX(0.9802);">Accessibility</div>
<svg class="t" style="left:1764.0px;top:1489.0px;" width="30" height="30" viewBox="0 0 30 30"><rect x="1.5" y="1.5" width="6" height="6" rx="1" fill="none" stroke="#3b3b40" stroke-width="2.2"/><rect x="11.5" y="1.5" width="6" height="6" rx="1" fill="none" stroke="#3b3b40" stroke-width="2.2"/><rect x="21.5" y="1.5" width="6" height="6" rx="1" fill="none" stroke="#3b3b40" stroke-width="2.2"/><rect x="1.5" y="11.5" width="6" height="6" rx="1" fill="none" stroke="#3b3b40" stroke-width="2.2"/><rect x="11.5" y="11.5" width="6" height="6" rx="1" fill="none" stroke="#3b3b40" stroke-width="2.2"/><rect x="21.5" y="11.5" width="6" height="6" rx="1" fill="none" stroke="#3b3b40" stroke-width="2.2"/><rect x="1.5" y="21.5" width="6" height="6" rx="1" fill="none" stroke="#3b3b40" stroke-width="2.2"/><rect x="11.5" y="21.5" width="6" height="6" rx="1" fill="none" stroke="#3b3b40" stroke-width="2.2"/><rect x="21.5" y="21.5" width="6" height="6" rx="1" fill="none" stroke="#3b3b40" stroke-width="2.2"/></svg>
<div class="t" style="left:1808.00px;top:1488.91px;font-size:26.23px;line-height:31px;color:#0c0c0d;transform:scaleX(0.9876);">Application</div>
<svg class="t" style="left:2446.0px;top:1486.0px;" width="34" height="36" viewBox="0 0 34 36"><path d="M7 10V6Q7 3 10 3H27Q30 3 30 6V30Q30 33 27 33H14" fill="none" stroke="#3b3b40" stroke-width="3.6"/><rect x="3.5" y="14" width="11" height="19" rx="2" fill="none" stroke="#3b3b40" stroke-width="3.6"/></svg>
<svg class="t" style="left:2498.0px;top:1498.0px;" width="36" height="12" viewBox="0 0 36 12"><circle cx="6" cy="6" r="3.9" fill="#3b3b40"/><circle cx="18" cy="6" r="3.9" fill="#3b3b40"/><circle cx="30" cy="6" r="3.9" fill="#3b3b40"/></svg>
<svg class="t" style="left:2555.0px;top:1491.0px;" width="26" height="26" viewBox="0 0 26 26"><path d="M3 3L23 23M23 3L3 23" stroke="#3b3b40" stroke-width="3.2" stroke-linecap="round"/></svg>
<div class="t" style="left:0.0px;top:1581.5px;width:2598.0px;height:2.0px;background:#e0e0e2;"></div>
<div class="t" style="left:1196.0px;top:1533.0px;width:2.0px;height:515.0px;background:#e0e0e2;"></div>
<div class="t" style="left:1898.5px;top:1533.0px;width:699.5px;height:49.0px;background:#f9f9fb;"></div>
<div class="t" style="left:1896.5px;top:1533.0px;width:2.0px;height:515.0px;background:#e0e0e2;"></div>
<svg class="t" style="left:8.0px;top:1545.0px;" width="30" height="30" viewBox="0 0 30 30"><circle cx="11.5" cy="11.5" r="8" fill="none" stroke="#9e9ea6" stroke-width="3"/><path d="M17.5 17.5L25 25" stroke="#9e9ea6" stroke-width="3.4" stroke-linecap="round"/></svg>
<div class="t" style="left:39.57px;top:1543.34px;font-size:25.00px;line-height:30px;color:#9a9aa2;transform:scaleX(0.9148);">Search HTML</div>
<div class="t" style="left:1076.0px;top:1542.0px;width:2.0px;height:32.0px;background:#e0e0e2;"></div>
<svg class="t" style="left:1095.0px;top:1545.0px;" width="26" height="26" viewBox="0 0 26 26"><path d="M13 2V24M2 13H24" stroke="#3b3b40" stroke-width="3.2" stroke-linecap="round"/></svg>
<svg class="t" style="left:1150.0px;top:1544.0px;" width="30" height="30" viewBox="0 0 30 30"><path d="M3.5 26.5Q1.5 24.5 3.5 22.5L17 9L21 13L7.5 26.5Q5.5 28.5 3.5 26.5Z" fill="none" stroke="#3b3b40" stroke-width="2"/><path d="M15 7L23 15M18.5 10.5L24 5Q26.5 2.5 28 4Q29.5 5.5 27 8L21.5 13.5Z" fill="#3b3b40" stroke="#3b3b40" stroke-width="3" stroke-linecap="round"/></svg>
<svg class="t" style="left:1214.0px;top:1546.0px;" width="24" height="26" viewBox="0 0 24 26"><path d="M2.5 2.5H21.5L14.5 12V23.5L9.5 19.5V12Z" fill="#d8d8dc" stroke="#9e9ea6" stroke-width="2.4" stroke-linejoin="round"/><path d="M2.5 2.5H21.5L18 7.5H6Z" fill="#f9f9fb"/><path d="M2.5 2.5H21.5L14.5 12V23.5L9.5 19.5V12Z" fill="none" stroke="#9e9ea6" stroke-width="2.4" stroke-linejoin="round"/></svg>
<div class="t" style="left:1242.90px;top:1543.21px;font-size:25.36px;line-height:30px;color:#9a9aa2;transform:scaleX(0.9352);">Filter Styles</div>
<div class="t" style="left:1559.79px;top:1547.81px;font-size:19.31px;line-height:23px;color:#0c0c0d;transform:scaleX(1.2694);">:hov</div>
<div class="t" style="left:1620.15px;top:1547.81px;font-size:19.31px;line-height:23px;color:#0c0c0d;transform:scaleX(1.3521);">.cls</div>
<svg class="t" style="left:1683.0px;top:1545.0px;" width="26" height="26" viewBox="0 0 26 26"><path d="M13 2V24M2 13H24" stroke="#3b3b40" stroke-width="3.2" stroke-linecap="round"/></svg>
<svg class="t" style="left:1734.6px;top:1540.7px;" width="34" height="34" viewBox="0 0 34 34"><circle cx="17" cy="17" r="8" fill="#3b3b40"/><path d="M29.00 17.00 L31.50 17.00" stroke="#3b3b40" stroke-width="3.2" stroke-linecap="round"/><path d="M25.49 25.49 L27.25 27.25" stroke="#3b3b40" stroke-width="3.2" stroke-linecap="round"/><path d="M17.00 29.00 L17.00 31.50" stroke="#3b3b40" stroke-width="3.2" stroke-linecap="round"/><path d="M8.51 25.49 L6.75 27.25" stroke="#3b3b40" stroke-width="3.2" stroke-linecap="round"/><path d="M5.00 17.00 L2.50 17.00" stroke="#3b3b40" stroke-width="3.2" stroke-linecap="round"/><path d="M8.51 8.51 L6.75 6.75" stroke="#3b3b40" stroke-width="3.2" stroke-linecap="round"/><path d="M17.00 5.00 L17.00 2.50" stroke="#3b3b40" stroke-width="3.2" stroke-linecap="round"/><path d="M25.49 8.51 L27.25 6.75" stroke="#3b3b40" stroke-width="3.2" stroke-linecap="round"/></svg>
<svg class="t" style="left:1792.0px;top:1542.0px;" width="32" height="32" viewBox="0 0 32 32"><defs><clipPath id="mc"><circle cx="16" cy="16" r="11.5"/></clipPath></defs><circle cx="16" cy="16" r="14" fill="#3b3b40"/><circle cx="16" cy="16" r="11" fill="#f9f9fb"/><circle cx="21.5" cy="15.5" r="10" fill="#3b3b40" clip-path="url(#mc)"/></svg>
<svg class="t" style="left:1851.0px;top:1543.0px;" width="26" height="30" viewBox="0 0 26 30"><path d="M6.5 2.6H15.5L23.4 10.5V22.5Q23.4 27.4 18.5 27.4H6.5Q2.6 27.4 2.6 23.5V6.5Q2.6 2.6 6.5 2.6Z" fill="none" stroke="#3b3b40" stroke-width="3.6" stroke-linejoin="round"/><path d="M15.5 3V7.5Q15.5 10.8 18.8 10.8H23" fill="none" stroke="#3b3b40" stroke-width="2.6"/><path d="M8 11.5H11.5M8 15.5H16M8 19.5H16" stroke="#3b3b40" stroke-width="1.8"/></svg>
<svg class="t" style="left:1911.0px;top:1545.0px;" width="30" height="26" viewBox="0 0 30 26"><rect x="2.6" y="2.3" width="24.8" height="21.9" rx="2" fill="#fff" stroke="#3b3b40" stroke-width="2"/><rect x="20" y="3.3" width="6.4" height="20" fill="#d0d0d4"/><path d="M19 2.5V24" stroke="#3b3b40" stroke-width="2"/><path d="M7.5 8L15 12.8L7.5 17.5Z" fill="#3b3b40"/></svg>
<div class="t" style="left:1974.76px;top:1541.56px;font-size:27.25px;line-height:33px;color:#0c0c0d;transform:scaleX(0.9342);">Layout</div>
<div class="t" style="left:2094.70px;top:1542.19px;font-size:26.86px;line-height:32px;color:#0c0c0d;transform:scaleX(0.9664);">Computed</div>
<div class="t" style="left:2257.26px;top:1542.19px;font-size:26.86px;line-height:32px;color:#0a66d8;transform:scaleX(0.9261);">Changes</div>
<div class="t" style="left:2236.0px;top:1533.5px;width:142.5px;height:4.0px;background:#0a84ff;"></div>
<div class="t" style="left:2399.70px;top:1542.19px;font-size:26.86px;line-height:32px;color:#0c0c0d;transform:scaleX(0.9710);">Compatibility</div>
<div class="t" style="left:2568.0px;top:1533.0px;width:2.0px;height:49.0px;background:#e0e0e2;"></div>
<svg class="t" style="left:2575.0px;top:1553.0px;" width="18" height="10" viewBox="0 0 18 10"><path d="M1 1H17L9 9Z" fill="#3b3b40"/></svg>
<svg class="t" style="left:72.0px;top:1598.0px;" width="17" height="11" viewBox="0 0 17 11"><path d="M0.5 0.5H16.5L8.5 10.5Z" fill="#8f8f9d"/></svg>
<div class="t" style="left:93.30px;top:1588.38px;font-family:'Liberation Mono',monospace;font-size:23.00px;line-height:28px;transform:scaleX(0.9587);white-space:pre"><span style="color:#38383d">&lt;</span><span style="color:#0074e8">div</span><span style="color:#38383d"> </span><span style="color:#dd00a9">id</span><span style="color:#38383d">=&quot;</span><span style="color:#003eaa">konto-module</span><span style="color:#38383d">&quot; </span><span style="color:#dd00a9">class</span><span style="color:#38383d">=&quot;</span><span style="color:#003eaa">ct-modal aos-init aos-animate</span><span style="color:#38383d">&quot; </span><span style="color:#dd00a9">data-aos</span><span style="color:#38383d">=&quot;</span><span style="color:#003eaa">slide-left</span><span style="color:#38383d">&quot;</span></div>
<div class="t" style="left:93.30px;top:1617.38px;font-family:'Liberation Mono',monospace;font-size:23.00px;line-height:28px;transform:scaleX(0.9587);white-space:pre"><span style="color:#dd00a9">data-aos-once</span><span style="color:#38383d">=&quot;</span><span style="color:#003eaa">false</span><span style="color:#38383d">&quot;&gt;</span></div>
<svg class="t" style="left:94.0px;top:1659.0px;" width="17" height="11" viewBox="0 0 17 11"><path d="M0.5 0.5H16.5L8.5 10.5Z" fill="#8f8f9d"/></svg>
<div class="t" style="left:114.80px;top:1648.88px;font-family:'Liberation Mono',monospace;font-size:23.00px;line-height:28px;transform:scaleX(0.9587);white-space:pre"><span style="color:#38383d">&lt;</span><span style="color:#0074e8">div</span><span style="color:#38383d"> </span><span style="color:#dd00a9">id</span><span style="color:#38383d">=&quot;</span><span style="color:#003eaa">div_block-406-7</span><span style="color:#38383d">&quot; </span><span style="color:#dd00a9">class</span><span style="color:#38383d">=&quot;</span><span style="color:#003eaa">ct-div-block</span><span style="color:#38383d">&quot;&gt;</span></div>
<div class="t" style="left:748.6px;top:1650.7px;width:54.4px;height:23px;background:#f0f0f4;border:1.6px solid #c6c6ce;border-radius:5px"></div>
<div class="t" style="left:754.40px;top:1651.65px;font-family:'Liberation Mono',monospace;font-size:19.00px;line-height:23px;transform:scaleX(0.9035);white-space:pre"><span style="color:#15141a">flex</span></div>
<svg class="t" style="left:116.0px;top:1691.0px;" width="17" height="11" viewBox="0 0 17 11"><path d="M0.5 0.5H16.5L8.5 10.5Z" fill="#8f8f9d"/></svg>
<div class="t" style="left:136.80px;top:1680.88px;font-family:'Liberation Mono',monospace;font-size:23.00px;line-height:28px;transform:scaleX(0.9587);white-space:pre"><span style="color:#38383d">&lt;</span><span style="color:#0074e8">div</span><span style="color:#38383d"> </span><span style="color:#dd00a9">id</span><span style="color:#38383d">=&quot;</span><span style="color:#003eaa">div_block-407-7</span><span style="color:#38383d">&quot; </span><span style="color:#dd00a9">class</span><span style="color:#38383d">=&quot;</span><span style="color:#003eaa">ct-div-block</span><span style="color:#38383d">&quot;&gt;</span></div>
<div class="t" style="left:770.6px;top:1682.7px;width:54.4px;height:23px;background:#f0f0f4;border:1.6px solid #c6c6ce;border-radius:5px"></div>
<div class="t" style="left:776.40px;top:1683.65px;font-family:'Liberation Mono',monospace;font-size:19.00px;line-height:23px;transform:scaleX(0.9035);white-space:pre"><span style="color:#15141a">flex</span></div>
<svg class="t" style="left:138.0px;top:1723.0px;" width="17" height="11" viewBox="0 0 17 11"><path d="M0.5 0.5H16.5L8.5 10.5Z" fill="#8f8f9d"/></svg>
<div class="t" style="left:158.80px;top:1712.88px;font-family:'Liberation Mono',monospace;font-size:23.00px;line-height:28px;transform:scaleX(0.9587);white-space:pre"><span style="color:#38383d">&lt;</span><span style="color:#0074e8">div</span><span style="color:#38383d"> </span><span style="color:#dd00a9">id</span><span style="color:#38383d">=&quot;</span><span style="color:#003eaa">div_block-408-7</span><span style="color:#38383d">&quot; </span><span style="color:#dd00a9">class</span><span style="color:#38383d">=&quot;</span><span style="color:#003eaa">ct-div-block left-menu-closebtn</span><span style="color:#38383d">&quot;&gt;</span></div>
<div class="t" style="left:1044.5px;top:1714.7px;width:65.5px;height:23px;background:#f0f0f4;border:1.6px solid #c6c6ce;border-radius:5px"></div>
<div class="t" style="left:1050.30px;top:1715.65px;font-family:'Liberation Mono',monospace;font-size:19.00px;line-height:23px;transform:scaleX(0.9035);white-space:pre"><span style="color:#15141a">event</span></div>
<div class="t" style="left:1120.0px;top:1714.7px;width:54.4px;height:23px;background:#f0f0f4;border:1.6px solid #c6c6ce;border-radius:5px"></div>
<div class="t" style="left:1125.80px;top:1715.65px;font-family:'Liberation Mono',monospace;font-size:19.00px;line-height:23px;transform:scaleX(0.9035);white-space:pre"><span style="color:#15141a">flex</span></div>
<div class="t" style="left:182px;top:1742px;width:992px;height:256px;border:1.5px solid #15141a;border-bottom:none"></div>
<div class="t" style="left:215.0px;top:1743.5px;width:1.5px;height:252.5px;background:#e0e0e2;"></div>
<div class="t" style="left:225.0px;top:1751.0px;width:940.0px;height:60.0px;background:#d6d6d9;"></div>
<div class="t" style="left:225.0px;top:1811.0px;width:715.0px;height:30.0px;background:#d6d6d9;"></div>
<svg class="t" style="left:192.5px;top:1764.0px;" width="17" height="11" viewBox="0 0 17 11"><path d="M0.5 0.5H16.5L8.5 10.5Z" fill="#8f8f9d"/></svg>
<div class="t" style="left:223.80px;top:1751.88px;font-family:'Liberation Mono',monospace;font-size:23.00px;line-height:28px;transform:scaleX(0.9587);white-space:pre"><span style="color:#0074e8">&lt;</span><span style="color:#0074e8">div</span><span style="color:#38383d"> </span><span style="color:#dd00a9">id</span><span style="color:#38383d">=&quot;</span><span style="color:#003eaa">fancy_icon-409-7</span><span style="color:#38383d">&quot; </span><span style="color:#dd00a9">class</span><span style="color:#38383d">=&quot;</span><span style="color:#003eaa">ct-fancy-icon</span></div>
<div class="t" style="left:223.80px;top:1781.88px;font-family:'Liberation Mono',monospace;font-size:23.00px;line-height:28px;transform:scaleX(0.9587);white-space:pre"><span style="color:#003eaa">oxel_icon_button_icon</span><span style="color:#38383d">&quot;</span><span style="color:#0074e8">&gt;&lt;svg</span><span style="color:#38383d"> </span><span style="color:#dd00a9">id</span><span style="color:#38383d">=&quot;</span><span style="color:#003eaa">svg-fancy_icon-409-7</span><span style="color:#38383d">&quot;</span><span style="color:#0074e8">&gt;&lt;use</span></div>
<div class="t" style="left:223.80px;top:1811.88px;font-family:'Liberation Mono',monospace;font-size:23.00px;line-height:28px;transform:scaleX(0.9587);white-space:pre"><span style="color:#dd00a9">xlink:href</span><span style="color:#38383d">=&quot;</span><span style="color:#003eaa">#FontAwesomeicon-close</span><span style="color:#38383d">&quot;</span><span style="color:#0074e8">&gt;&lt;/use&gt;&lt;/svg&gt;&lt;/div&gt;</span></div>
<div class="t" style="left:0.0px;top:1995.0px;width:1196.0px;height:2.0px;background:#e0e0e2;"></div>
<div class="t" style="left:0.0px;top:1997.0px;width:1196.0px;height:51.0px;background:#fff;"></div>
<div class="t" style="left:30.51px;top:2004.96px;font-size:27.54px;line-height:33px;color:#737373;transform:scaleX(0.8969);">408-7.ct-div-block.left-me...</div>
<div class="t" style="left:0.0px;top:1997.0px;width:37.0px;height:51.0px;background:#fff;"></div>
<svg class="t" style="left:6.0px;top:2011.0px;" width="20" height="26" viewBox="0 0 20 26"><path d="M15 3L5 13L15 23" fill="none" stroke="#3b3b40" stroke-width="3.4" stroke-linecap="round" stroke-linejoin="round"/></svg>
<div class="t" style="left:36.0px;top:1997.0px;width:2.0px;height:51.0px;background:#e0e0e2;"></div>
<svg class="t" style="left:339.0px;top:2015.0px;" width="12" height="16" viewBox="0 0 12 16"><path d="M2 2L9 8L2 14" fill="none" stroke="#9a9aa8" stroke-width="2.2" stroke-linecap="round"/></svg>
<div class="t" style="left:364.03px;top:2006.42px;font-size:26.21px;line-height:31px;color:#0a5ac8;transform:scaleX(0.9256);">div#fancy_icon-409-7.ct-fancy-icon.oxel_...</div>
<svg class="t" style="left:836.0px;top:2015.0px;" width="12" height="16" viewBox="0 0 12 16"><path d="M2 2L9 8L2 14" fill="none" stroke="#9a9aa8" stroke-width="2.2" stroke-linecap="round"/></svg>
<div class="t" style="left:860.27px;top:2006.42px;font-size:26.21px;line-height:31px;color:#15141a;transform:scaleX(0.9340);">svg<span style="color:#737373">#svg-fancy_icon-409-7</span></div>
<svg class="t" style="left:1160.0px;top:2011.0px;" width="20" height="26" viewBox="0 0 20 26"><path d="M5 3L15 13L5 23" fill="none" stroke="#3b3b40" stroke-width="3.4" stroke-linecap="round" stroke-linejoin="round"/></svg>
<div class="t" style="left:1204.80px;top:1588.88px;font-family:'Liberation Mono',monospace;font-size:23.00px;line-height:28px;transform:scaleX(0.9587);white-space:pre"><span style="color:#15141a">element {</span></div>
<svg class="t" style="left:1346.0px;top:1589.0px;" width="28" height="28" viewBox="0 0 28 28"><rect x="7.1" y="7.1" width="13.8" height="13.8" rx="3.5" fill="none" stroke="#8e8e93" stroke-width="3.8"/><path d="M14 1V7M14 21V27M1 14H7M21 14H27" stroke="#8e8e93" stroke-width="2"/></svg>
<div class="t" style="left:1810.92px;top:1588.88px;font-family:'Liberation Mono',monospace;font-size:23.00px;line-height:28px;transform:scaleX(0.9587);white-space:pre"><span style="color:#737373">inline</span></div>
<div class="t" style="left:1204.80px;top:1618.88px;font-family:'Liberation Mono',monospace;font-size:23.00px;line-height:28px;transform:scaleX(0.9587);white-space:pre"><span style="color:#15141a">}</span></div>
<div class="t" style="left:1198.0px;top:1649.0px;width:698.5px;height:2.0px;background:#e0e0e2;"></div>
<div class="t" style="left:1204.80px;top:1656.88px;font-family:'Liberation Mono',monospace;font-size:23.00px;line-height:28px;transform:scaleX(0.9587);white-space:pre"><span style="color:#15141a">div.ct-fancy-icon</span></div>
<svg class="t" style="left:1443.0px;top:1656.0px;" width="28" height="28" viewBox="0 0 28 28"><rect x="7.1" y="7.1" width="13.8" height="13.8" rx="3.5" fill="none" stroke="#8e8e93" stroke-width="3.8"/><path d="M14 1V7M14 21V27M1 14H7M21 14H27" stroke="#8e8e93" stroke-width="2"/></svg>
<div class="t" style="left:1485.80px;top:1656.88px;font-family:'Liberation Mono',monospace;font-size:23.00px;line-height:28px;transform:scaleX(0.9587);white-space:pre"><span style="color:#15141a">{</span></div>
<div class="t" style="left:1705.08px;top:1656.88px;font-family:'Liberation Mono',monospace;font-size:23.00px;line-height:28px;transform:scaleX(0.9587);white-space:pre"><span style="color:#737373">oxygen.css:238</span></div>
<div class="t" style="left:1245.80px;top:1688.88px;font-family:'Liberation Mono',monospace;font-size:23.00px;line-height:28px;transform:scaleX(0.9587);white-space:pre"><span style="color:#0074e8">display</span><span style="color:#15141a">: </span></div>
<div class="t" style="left:1365px;top:1693px;width:25px;height:18px;border:1.5px dotted #15141a"></div>
<svg class="t" style="left:1370.0px;top:1697.0px;" width="16" height="11" viewBox="0 0 16 11"><rect x="1" y="1" width="14" height="9" fill="none" stroke="#15141a" stroke-width="1.6"/><path d="M8 1V10" stroke="#15141a" stroke-width="1.6"/></svg>
<div class="t" style="left:1400.80px;top:1688.88px;font-family:'Liberation Mono',monospace;font-size:23.00px;line-height:28px;transform:scaleX(0.9587);white-space:pre"><span style="color:#dd00a9">inline-flex</span><span style="color:#15141a">;</span></div>
<div class="t" style="left:1245.80px;top:1717.88px;font-family:'Liberation Mono',monospace;font-size:23.00px;line-height:28px;transform:scaleX(0.9587);white-space:pre"><span style="color:#0074e8">border-radius</span><span style="color:#15141a">: </span></div>
<svg class="t" style="left:1443.0px;top:1724.0px;" width="12" height="16" viewBox="0 0 12 16"><path d="M1 1L11 8L1 15Z" fill="#737373"/></svg>
<div class="t" style="left:1458.80px;top:1717.88px;font-family:'Liberation Mono',monospace;font-size:23.00px;line-height:28px;transform:scaleX(0.9587);white-space:pre"><span style="color:#dd00a9">50%</span><span style="color:#15141a">;</span></div>
<div class="t" style="left:1204.80px;top:1744.88px;font-family:'Liberation Mono',monospace;font-size:23.00px;line-height:28px;transform:scaleX(0.9587);white-space:pre"><span style="color:#15141a">}</span></div>
<div class="t" style="left:1198.0px;top:1775.0px;width:698.5px;height:2.0px;background:#e0e0e2;"></div>
<div class="t" style="left:1204.80px;top:1782.38px;font-family:'Liberation Mono',monospace;font-size:23.00px;line-height:28px;transform:scaleX(0.9587);white-space:pre"><span style="color:#15141a">.oxel_icon_button_icon</span></div>
<svg class="t" style="left:1509.0px;top:1782.0px;" width="28" height="28" viewBox="0 0 28 28"><rect x="7.1" y="7.1" width="13.8" height="13.8" rx="3.5" fill="none" stroke="#8e8e93" stroke-width="3.8"/><path d="M14 1V7M14 21V27M1 14H7M21 14H27" stroke="#8e8e93" stroke-width="2"/></svg>
<div class="t" style="left:1551.80px;top:1782.38px;font-family:'Liberation Mono',monospace;font-size:23.00px;line-height:28px;transform:scaleX(0.9587);white-space:pre"><span style="color:#15141a">{</span></div>
<div class="t" style="left:1652.16px;top:1782.38px;font-family:'Liberation Mono',monospace;font-size:23.00px;line-height:28px;transform:scaleX(0.9587);white-space:pre"><span style="color:#737373">universal.css:1885</span></div>
<div class="t" style="left:1245.80px;top:1814.88px;font-family:'Liberation Mono',monospace;font-size:23.00px;line-height:28px;transform:scaleX(0.9587);white-space:pre"><span style="color:#8f8f9d">icon-padding: 10px</span></div>
<div class="t" style="left:1247.0px;top:1826.5px;width:249.0px;height:2.0px;background:#7a7a84;"></div>
<div class="t" style="left:1482.80px;top:1814.88px;font-family:'Liberation Mono',monospace;font-size:23.00px;line-height:28px;transform:scaleX(0.9587);white-space:pre"><span style="color:#15141a">;</span></div>
<svg class="t" style="left:1506.0px;top:1815.0px;" width="26" height="23" viewBox="0 0 26 23"><path d="M13 1.5L25 22H1Z" fill="#d7b600" stroke="#d7b600" stroke-width="1.5" stroke-linejoin="round"/><path d="M13 8V14.5" stroke="#fff" stroke-width="3" stroke-linecap="round"/><circle cx="13" cy="18.5" r="1.8" fill="#fff"/></svg>
<div class="t" style="left:1204.80px;top:1841.88px;font-family:'Liberation Mono',monospace;font-size:23.00px;line-height:28px;transform:scaleX(0.9587);white-space:pre"><span style="color:#15141a">}</span></div>
<div class="t" style="left:1198.0px;top:1871.5px;width:698.5px;height:2.0px;background:#e0e0e2;"></div>
<div class="t" style="left:1204.80px;top:1879.38px;font-family:'Liberation Mono',monospace;font-size:23.00px;line-height:28px;transform:scaleX(0.9587);white-space:pre"><span style="color:#15141a">.oxel_icon_button_icon</span></div>
<svg class="t" style="left:1509.0px;top:1879.0px;" width="28" height="28" viewBox="0 0 28 28"><rect x="7.1" y="7.1" width="13.8" height="13.8" rx="3.5" fill="none" stroke="#8e8e93" stroke-width="3.8"/><path d="M14 1V7M14 21V27M1 14H7M21 14H27" stroke="#8e8e93" stroke-width="2"/></svg>
<div class="t" style="left:1551.80px;top:1879.38px;font-family:'Liberation Mono',monospace;font-size:23.00px;line-height:28px;transform:scaleX(0.9587);white-space:pre"><span style="color:#15141a">{</span></div>
<div class="t" style="left:1652.16px;top:1879.38px;font-family:'Liberation Mono',monospace;font-size:23.00px;line-height:28px;transform:scaleX(0.9587);white-space:pre"><span style="color:#737373">universal.css:1883</span></div>
<div class="t" style="left:1245.80px;top:1910.88px;font-family:'Liberation Mono',monospace;font-size:23.00px;line-height:28px;transform:scaleX(0.9587);white-space:pre"><span style="color:#0074e8">color</span><span style="color:#15141a">: </span></div>
<svg class="t" style="left:1336.0px;top:1910.0px;" width="26" height="26" viewBox="0 0 26 26"><circle cx="13" cy="13" r="11.5" fill="#fff" stroke="#b8b8bf" stroke-width="1.5"/></svg>
<div class="t" style="left:1368.80px;top:1910.88px;font-family:'Liberation Mono',monospace;font-size:23.00px;line-height:28px;transform:scaleX(0.9587);white-space:pre"><span style="color:#dd00a9">#ffffff</span><span style="color:#15141a">;</span></div>
<div class="t" style="left:1204.80px;top:1938.38px;font-family:'Liberation Mono',monospace;font-size:23.00px;line-height:28px;transform:scaleX(0.9587);white-space:pre"><span style="color:#15141a">}</span></div>
<div class="t" style="left:1198.0px;top:1968.0px;width:698.5px;height:2.0px;background:#e0e0e2;"></div>
<div class="t" style="left:1204.80px;top:1974.38px;font-family:'Liberation Mono',monospace;font-size:23.00px;line-height:28px;transform:scaleX(0.9587);white-space:pre"><span style="color:#15141a">*</span><span style="color:#737373">, ::after, ::before</span></div>
<svg class="t" style="left:1483.0px;top:1974.0px;" width="28" height="28" viewBox="0 0 28 28"><rect x="7.1" y="7.1" width="13.8" height="13.8" rx="3.5" fill="none" stroke="#8e8e93" stroke-width="3.8"/><path d="M14 1V7M14 21V27M1 14H7M21 14H27" stroke="#8e8e93" stroke-width="2"/></svg>
<div class="t" style="left:1525.80px;top:1974.38px;font-family:'Liberation Mono',monospace;font-size:23.00px;line-height:28px;transform:scaleX(0.9587);white-space:pre"><span style="color:#15141a">{</span></div>
<div class="t" style="left:1705.08px;top:1974.38px;font-family:'Liberation Mono',monospace;font-size:23.00px;line-height:28px;transform:scaleX(0.9587);white-space:pre"><span style="color:#737373">oxygen.css:187</span></div>
<div class="t" style="left:1245.80px;top:2008.88px;font-family:'Liberation Mono',monospace;font-size:23.00px;line-height:28px;transform:scaleX(0.9587);white-space:pre"><span style="color:#0074e8">box-sizing</span><span style="color:#15141a">: </span><span style="color:#dd00a9">inherit</span><span style="color:#15141a">;</span></div>
<div class="t" style="left:1204.80px;top:2037.88px;font-family:'Liberation Mono',monospace;font-size:23.00px;line-height:28px;transform:scaleX(0.9587);white-space:pre"><span style="color:#15141a">}</span></div>
<div class="t" style="left:1898.5px;top:1636.0px;width:699.5px;height:412.0px;background:#effbea;"></div>
<div class="t" style="left:1907.80px;top:1626.38px;font-family:'Liberation Mono',monospace;font-size:23.00px;line-height:28px;transform:scaleX(0.9587);white-space:pre"><span style="color:#3a8f27">+  </span><span style="color:#0074e8">width</span><span style="color:#15141a">: </span><span style="color:#dd00a9">3rem</span><span style="color:#15141a">;</span></div>
<div class="t" style="left:1907.80px;top:1665.38px;font-family:'Liberation Mono',monospace;font-size:23.00px;line-height:28px;transform:scaleX(0.9587);white-space:pre"><span style="color:#3a8f27">+  </span><span style="color:#0074e8">border</span><span style="color:#15141a">: </span><span style="color:#15141a">;</span></div>
<div class="t" style="left:1907.80px;top:1704.38px;font-family:'Liberation Mono',monospace;font-size:23.00px;line-height:28px;transform:scaleX(0.9587);white-space:pre"><span style="color:#3a8f27">+  </span><span style="color:#0074e8">border-radius</span><span style="color:#15141a">: </span><span style="color:#dd00a9">50px</span><span style="color:#15141a">;</span></div>
<div class="t" style="left:1907.80px;top:1742.88px;font-family:'Liberation Mono',monospace;font-size:23.00px;line-height:28px;transform:scaleX(0.9587);white-space:pre"><span style="color:#3a8f27">+  </span><span style="color:#0074e8">border</span><span style="color:#15141a">: </span><span style="color:#dd00a9">none</span><span style="color:#15141a">;</span></div>
<div class="t" style="left:1907.80px;top:1781.88px;font-family:'Liberation Mono',monospace;font-size:23.00px;line-height:28px;transform:scaleX(0.9587);white-space:pre"><span style="color:#3a8f27">+  </span><span style="color:#0074e8">background</span><span style="color:#15141a">: </span><span style="color:#dd00a9">#fff</span><span style="color:#15141a">;</span></div>
<div class="t" style="left:1907.80px;top:1821.88px;font-family:'Liberation Mono',monospace;font-size:23.00px;line-height:28px;transform:scaleX(0.9587);white-space:pre"><span style="color:#3a8f27">+  </span><span style="color:#0074e8">display</span><span style="color:#15141a">: </span><span style="color:#dd00a9">flex</span><span style="color:#15141a">;</span></div>
<div class="t" style="left:1907.80px;top:1860.38px;font-family:'Liberation Mono',monospace;font-size:23.00px;line-height:28px;transform:scaleX(0.9587);white-space:pre"><span style="color:#3a8f27">+  </span><span style="color:#0074e8">justify-content</span><span style="color:#15141a">: </span><span style="color:#dd00a9">center</span><span style="color:#15141a">;</span></div>
<div class="t" style="left:1907.80px;top:1899.38px;font-family:'Liberation Mono',monospace;font-size:23.00px;line-height:28px;transform:scaleX(0.9587);white-space:pre"><span style="color:#3a8f27">+  </span><span style="color:#0074e8">align-items</span><span style="color:#15141a">: </span><span style="color:#dd00a9">center</span><span style="color:#15141a">;</span></div>
<div class="t" style="left:1907.80px;top:1937.88px;font-family:'Liberation Mono',monospace;font-size:23.00px;line-height:28px;transform:scaleX(0.9587);white-space:pre"><span style="color:#3a8f27">+  </span><span style="color:#0074e8">font-size</span><span style="color:#15141a">: </span><span style="color:#dd00a9">1.5rem</span><span style="color:#15141a">;</span></div>
<div class="t" style="left:1907.80px;top:1976.88px;font-family:'Liberation Mono',monospace;font-size:23.00px;line-height:28px;transform:scaleX(0.9587);white-space:pre"><span style="color:#3a8f27">+  </span><span style="color:#0074e8">color</span><span style="color:#15141a">: </span><span style="color:#dd00a9">black</span><span style="color:#15141a">;</span></div>
<div class="t" style="left:1907.80px;top:2015.38px;font-family:'Liberation Mono',monospace;font-size:23.00px;line-height:28px;transform:scaleX(0.9587);white-space:pre"><span style="color:#3a8f27">+</span></div>
<div class="t" style="left:1927.80px;top:2015.38px;font-family:'Liberation Mono',monospace;font-size:23.00px;line-height:28px;transform:scaleX(0.9587);white-space:pre"><span style="color:#15141a">}</span></div>
<div class="t" style="left:1898.5px;top:1583.5px;width:699.5px;height:50.5px;background:#fff;"></div>
<div class="t" style="left:1898.5px;top:1634.0px;width:699.5px;height:2.0px;background:#e0e0e2;"></div>
<svg class="t" style="left:1916.0px;top:1592.0px;" width="32" height="34" viewBox="0 0 32 34"><path d="M8 22H6Q3 22 3 19V5Q3 2 6 2H12L16 6V9" fill="none" stroke="#3b3b40" stroke-width="3"/><path d="M14 10H22L27 15V29Q27 32 24 32H14Q11 32 11 29V13Q11 10 14 10Z" fill="none" stroke="#3b3b40" stroke-width="3"/><path d="M22 10V15H27" fill="none" stroke="#3b3b40" stroke-width="2"/></svg>
<div class="t" style="left:1956.83px;top:1595.78px;font-size:23.71px;line-height:28px;color:#15141a;transform:scaleX(0.9838);">Copy All Changes</div>
<div class="t" style="left:2598px;top:48px;width:6px;height:2000px;background:linear-gradient(180deg,#c0508a 0px,#c8609c 60px,#c0609a 900px,#b450a8 1100px,#a030c8 1250px,#8418d8 1450px,#5a10c8 1650px,#3c08a8 2000px)"></div>
<div class="t" style="left:0.0px;top:48.0px;width:323.5px;height:2.0px;background:#c04a6c;"></div>
<div class="t" style="left:323.5px;top:48.0px;width:1785.0px;height:2.0px;background:#a2a6ba;"></div>
<div class="t" style="left:2108.5px;top:48.0px;width:495.5px;height:2.0px;background:#b47ca8;"></div>
<svg class="t" style="left:0;top:0" width="2604" height="2048" viewBox="0 0 2604 2048"><path d="M-1 49H16A20 20 0 0 0 -4 69V70H-1Z" fill="#c85a88"/><path d="M2576 49H2605V74H2598A22 22 0 0 0 2576 50Z" fill="#c4629c"/><path d="M2598 2028A22 22 0 0 1 2576 2050H2605V2028Z" fill="#3a08a8"/><path d="M-1 2040A20 20 0 0 0 16 2050H-1Z" fill="#1e0a6a"/></svg>
</body></html>
